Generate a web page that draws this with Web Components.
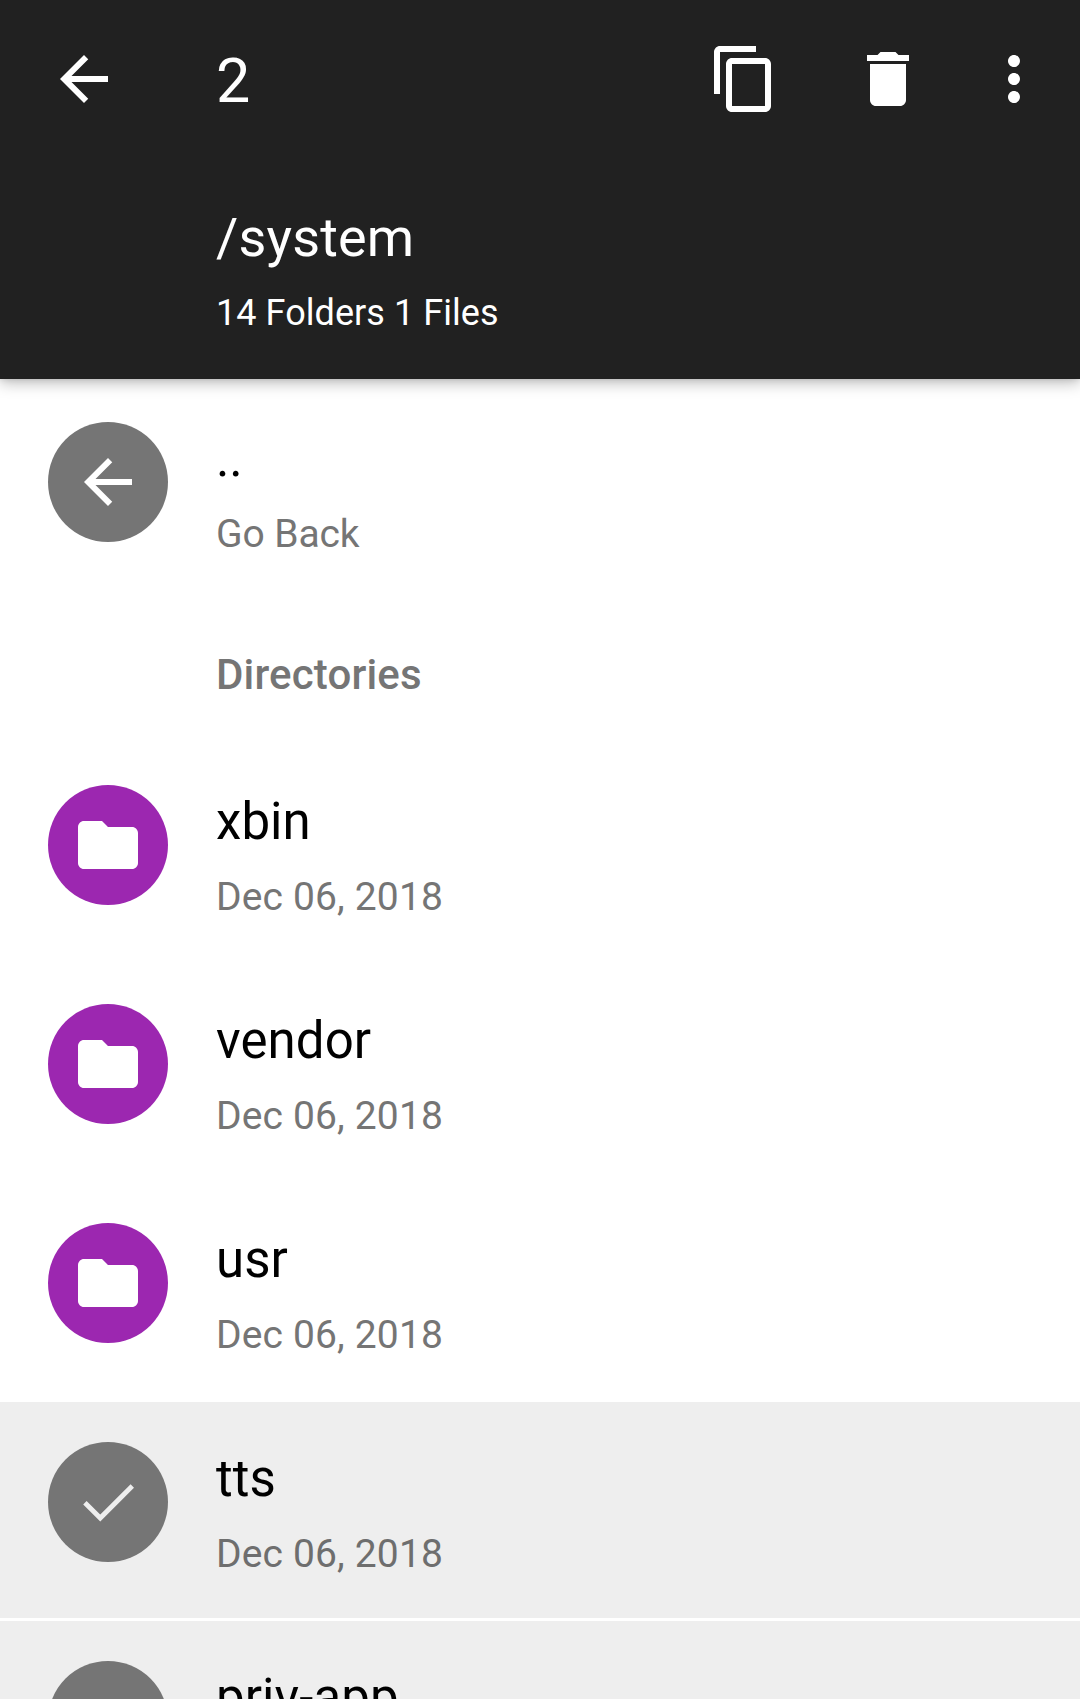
<!DOCTYPE html>
<html lang="en">
<head>
<meta charset="utf-8">
<title>/system</title>
<style>
html,body{margin:0;height:1699px;overflow:hidden;background:#fff;font-family:Roboto,sans-serif}
</style>
</head>
<body>
<file-manager></file-manager>
<script>
const ICONS = {
  back: '<path d="M20 11H7.83l5.59-5.59L12 4l-8 8 8 8 1.41-1.41L7.83 13H20v-2z"/>',
  copy: '<path d="M16 1H4c-1.1 0-2 .9-2 2v14h2V3h12V1zm3 4H8c-1.1 0-2 .9-2 2v14c0 1.1.9 2 2 2h11c1.1 0 2-.9 2-2V7c0-1.1-.9-2-2-2zm0 16H8V7h11v14z"/>',
  trash: '<path d="M6 19c0 1.1.9 2 2 2h8c1.1 0 2-.9 2-2V7H6v12zM19 4h-3.500l-1-1h-5l-1 1H5v2h14V4z"/>',
  more: '<path d="M12 8c1.1 0 2-.9 2-2s-.9-2-2-2-2 .9-2 2 .9 2 2 2zm0 2c-1.1 0-2 .9-2 2s.9 2 2 2 2-.9 2-2-.9-2-2-2zm0 6c-1.1 0-2 .9-2 2s.9 2 2 2 2-.9 2-2-.9-2-2-2z"/>',
  folder: '<path d="M10 4H4c-1.1 0-1.990.9-1.990 2L2 18c0 1.1.9 2 2 2h16c1.1 0 2-.9 2-2V8c0-1.1-.9-2-2-2h-8l-2-2z"/>',
  check: '<path d="M4.300 12.250L9.420 17.350L20.100 6.670" fill="none" stroke="#eee" stroke-width="1.600"/>'
};

class UiIcon extends HTMLElement {
  connectedCallback() {
    this.attachShadow({mode: 'open'}).innerHTML = `
      <style>:host{display:block;flex:none;width:72px;height:72px}svg{display:block;width:100%;height:100%;fill:#fff}</style>
      <svg viewBox="0 0 24 24" aria-hidden="true">${ICONS[this.getAttribute('name')]}</svg>`;
  }
}

class AppHeader extends HTMLElement {
  connectedCallback() {
    this.attachShadow({mode: 'open'}).innerHTML = `
      <style>
        :host{display:flex;flex-direction:column;flex:none;height:379px;background:#212121;color:#fff;
          position:relative;z-index:1;box-shadow:0 4px 14px rgba(0,0,0,.26),0 0 6px rgba(0,0,0,.12)}
        .bar{display:flex;align-items:center;height:158px;padding:0 30px 0 48px}
        .count{flex:1;margin-left:96px;padding-top:4px;font-size:61px;line-height:70px}
        .more{margin-left:54px}
        .del{margin-left:72px}
        .info{padding:48px 0 0 216px}
        .path{font-size:54px;line-height:64px;letter-spacing:.16px}
        .sum{font-size:36px;line-height:42px;margin-top:22px;letter-spacing:.06px}
      </style>
      <div class="bar">
        <ui-icon name="back"></ui-icon>
        <div class="count"><slot name="count"></slot></div>
        <ui-icon name="copy"></ui-icon>
        <ui-icon class="del" name="trash"></ui-icon>
        <ui-icon class="more" name="more"></ui-icon>
      </div>
      <div class="info">
        <div class="path"><slot name="path"></slot></div>
        <div class="sum"><slot name="summary"></slot></div>
      </div>`;
  }
}

class FileRow extends HTMLElement {
  connectedCallback() {
    this.attachShadow({mode: 'open'}).innerHTML = `
      <style>
        :host{display:flex;flex:none;height:216px;box-sizing:border-box;padding-left:48px;gap:48px}
        :host([selected]){background:#eee}
        .avatar{display:flex;align-items:center;justify-content:center;flex:none;width:120px;height:120px;
          margin-top:40px;border-radius:50%;background:#757575}
        :host([icon=folder]) .avatar{background:#9c27b0}
        .text{padding-top:47px;white-space:nowrap}
        .name{font-size:51px;line-height:60px;color:#000;letter-spacing:.08px}
        .sub{font-size:39px;line-height:46px;margin-top:22px;color:#757575;letter-spacing:.15px}
        :host([icon=back]) .text div{letter-spacing:-.1px}
        :host([selected]) .sub{color:#6e6e6e}
      </style>
      <div class="avatar"><ui-icon name="${this.getAttribute('icon')}"></ui-icon></div>
      <div class="text">
        <div class="name"><slot></slot></div>
        <div class="sub"><slot name="sub"></slot></div>
      </div>`;
  }
}

class SectionTitle extends HTMLElement {
  connectedCallback() {
    this.attachShadow({mode: 'open'}).innerHTML = `
      <style>:host{display:block;flex:none;height:141px;box-sizing:border-box;padding:49px 0 0 216px;
        font-size:42px;line-height:50px;font-weight:500;letter-spacing:.15px;color:#757575}</style>
      <slot></slot>`;
  }
}

class FileManager extends HTMLElement {
  connectedCallback() {
    this.attachShadow({mode: 'open'}).innerHTML = `
      <style>
        :host{display:flex;flex-direction:column;height:1699px;overflow:hidden}
        .list{display:flex;flex-direction:column;gap:3px;padding-top:3px}
      </style>
      <app-header>
        <span slot="count">2</span>
        <span slot="path">/system</span>
        <span slot="summary">14 Folders 1 Files</span>
      </app-header>
      <div class="list">
        <file-row icon="back">..<span slot="sub">Go Back</span></file-row>
        <section-title>Directories</section-title>
        <file-row icon="folder">xbin<span slot="sub">Dec 06, 2018</span></file-row>
        <file-row icon="folder">vendor<span slot="sub">Dec 06, 2018</span></file-row>
        <file-row icon="folder">usr<span slot="sub">Dec 06, 2018</span></file-row>
        <file-row icon="check" selected>tts<span slot="sub">Dec 06, 2018</span></file-row>
        <file-row icon="check" selected>priv-app</file-row>
      </div>`;
  }
}

customElements.define('ui-icon', UiIcon);
customElements.define('app-header', AppHeader);
customElements.define('file-row', FileRow);
customElements.define('section-title', SectionTitle);
customElements.define('file-manager', FileManager);
</script>
</body>
</html>
